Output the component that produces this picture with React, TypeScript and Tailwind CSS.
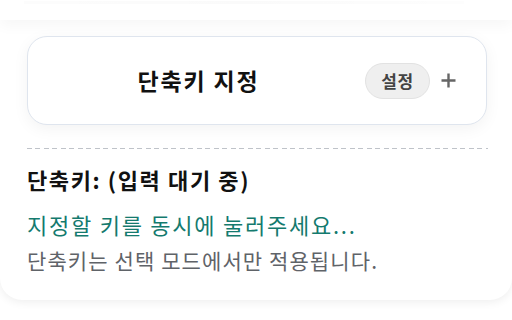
import React from "react";

export default function App() {
  const font = { fontFamily: '"Noto Sans CJK KR", "Noto Sans", sans-serif' };
  return (
    <div className="w-[512px] h-[320px] bg-white overflow-hidden" style={font}>
      <div className="relative h-[300px] w-full bg-white rounded-b-[22px] shadow-[0_2px_10px_rgba(0,0,0,0.07)] flex flex-col">
        <div className="h-[20px] w-full bg-white shadow-[0_6px_14px_rgba(0,0,0,0.035)] z-10 flex items-start px-6">
          <div className="h-[3px] w-[440px] mt-[1px] bg-[linear-gradient(90deg,rgba(0,0,0,0.01),rgba(0,0,0,0.02),rgba(0,0,0,0.008))]" />
        </div>
        <div className="pl-[27px] pr-[25px] pt-4">
          <div className="h-[89px] rounded-[20px] border border-[#dfe5ee] bg-white shadow-[0_4px_16px_rgba(0,0,0,0.05)] flex items-center pr-[29px]">
            <div className="flex-1 text-center text-[23px] tracking-[1.8px] font-bold text-[#111] leading-none pl-[4px]">단축키 지정</div>
            <div className="h-[36px] w-[65px] rounded-full bg-[#efefef] border border-[#e2e2e2] flex items-center justify-center text-[17px] font-bold text-[#444] tracking-[0.5px]">설정</div>
            <div className="ml-[9px] w-[18px] h-[18px] flex items-center justify-center">
              <svg width="17" height="17" viewBox="0 0 17 17">
                <path d="M8.5 1.5v14M1.5 8.5h14" stroke="#666" strokeWidth="2.4" />
              </svg>
            </div>
          </div>
        </div>
        <div className="ml-[27px] mr-[24px] mt-[23px] h-[1px] bg-[repeating-linear-gradient(90deg,#bfc3c9_0_5px,transparent_5px_8.5px)]" />
        <div className="px-[27px] pt-[16px] flex flex-col">
          <div className="text-[22px] tracking-[1.6px] font-bold text-[#111] leading-[28px]">단축키: (입력 대기 중)</div>
          <div className="text-[22px] tracking-[1.75px] text-[#147a6e] leading-[28px] mt-[17px]">지정할 키를 동시에 눌러주세요...</div>
          <div className="text-[21px] tracking-[1.1px] text-[#5f6368] leading-[26px] mt-[9px]">단축키는 선택 모드에서만 적용됩니다.</div>
        </div>
      </div>
    </div>
  );
}
